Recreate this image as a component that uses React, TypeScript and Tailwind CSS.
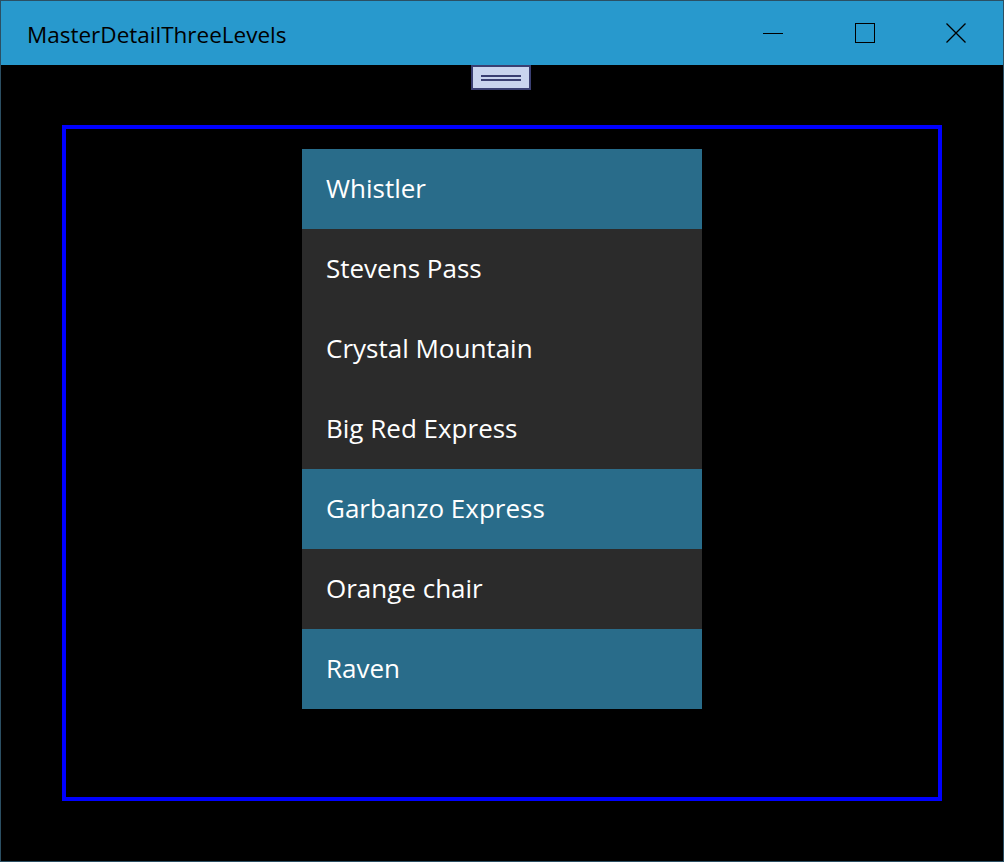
import React from "react";

const items: { name: string; sel: boolean }[] = [
  { name: "Whistler", sel: true },
  { name: "Stevens Pass", sel: false },
  { name: "Crystal Mountain", sel: false },
  { name: "Big Red Express", sel: false },
  { name: "Garbanzo Express", sel: true },
  { name: "Orange chair", sel: false },
  { name: "Raven", sel: true },
];

export default function App() {
  return (
    <div
      className="w-[1004px] h-[862px] border border-[#2b4f63] bg-black flex flex-col overflow-hidden"
      style={{ fontFamily: '"Segoe UI", "Open Sans", "Noto Sans", sans-serif' }}
    >
      <div className="h-[64px] bg-[#2899cd] flex items-center shrink-0">
        <div className="pl-[26px] text-[22.5px] text-black flex-1 leading-none pt-[4px]">MasterDetailThreeLevels</div>
        <div className="flex items-center h-full">
          <div className="w-[92px] h-full flex items-center justify-center">
            <svg width="20" height="20" viewBox="0 0 20 20">
              <path d="M0 10.5 H20" stroke="black" strokeWidth="1" />
            </svg>
          </div>
          <div className="w-[92px] h-full flex items-center justify-center">
            <svg width="20" height="20" viewBox="0 0 20 20">
              <rect x="0.5" y="0.5" width="19" height="19" fill="none" stroke="black" strokeWidth="1" />
            </svg>
          </div>
          <div className="w-[92px] h-full flex items-center justify-center pr-[2px]">
            <svg width="20" height="20" viewBox="0 0 20 20">
              <path d="M0.5 0.5 L19.5 19.5 M19.5 0.5 L0.5 19.5" stroke="black" strokeWidth="1.3" />
            </svg>
          </div>
        </div>
      </div>
      <div className="flex-1 flex flex-col items-center relative">
        <div className="absolute top-0 left-[470px] w-[60px] h-[25px] border-2 border-[#3a3f72] bg-[#c9d4ee] flex flex-col items-center justify-center gap-[2px]">
          <div className="w-[40px] h-[2px] bg-[#3a3f72]" />
          <div className="w-[40px] h-[2px] bg-[#3a3f72]" />
        </div>
        <div className="mt-[60px] ml-[61px] mr-[61px] mb-[60px] self-stretch flex-1 border-4 border-[#0000ff] flex flex-col items-center pt-[20px]">
          <div className="w-[400px] flex flex-col">
            {items.map((it) => (
              <div
                key={it.name}
                className={
                  "h-[80px] flex items-center pl-[24px] pb-[2px] text-white text-[26px] " +
                  (it.sel ? "bg-[#296c8a]" : "bg-[#2b2b2b]")
                }
              >
                {it.name}
              </div>
            ))}
          </div>
        </div>
      </div>
    </div>
  );
}
